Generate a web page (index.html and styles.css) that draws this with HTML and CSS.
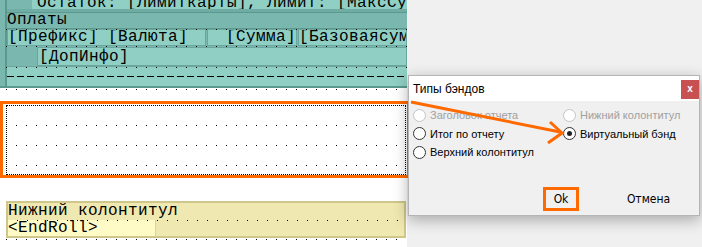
FILE: index.html
```html
<!DOCTYPE html>
<html lang="ru">
<head>
    <meta charset="UTF-8">
    <title>Типы бэндов</title>
    <link rel="stylesheet" href="styles.css">
</head>
<body>
    <div class="screen">
        <div class="designer">
            <div class="band band-teal">
                <div class="band-inner">
                    <div class="row row-top">
                        <div class="cell-dark"></div>
                        <div class="cell-text"><span>Остаток: [Лимиткарты], Лимит: [МаксСу</span></div>
                    </div>
                    <div class="strip"></div>
                    <div class="row row-head">Оплаты</div>
                    <div class="row row-fields dotted">
                        <div class="cell c1">[Префикс] [Валюта]</div>
                        <div class="cell c2">[Сумма]</div>
                        <div class="cell c3">[Базоваясум</div>
                    </div>
                    <div class="row row-info dotted">
                        <div class="info-gap"></div>
                        <div class="cell info">[ДопИнфо]</div>
                    </div>
                    <div class="row row-line dotted">
                        <div class="dash"></div>
                    </div>
                </div>
            </div>
            <div class="dots-line"></div>

            <div class="selected">
                <div class="empty-band">
                    <div class="grid-dots"></div>
                    <div class="grid-dots"></div>
                    <div class="grid-dots"></div>
                </div>
            </div>

            <div class="band band-yellow">
                <div class="yellow-head">Нижний колонтитул</div>
                <div class="yellow-row dotted">
                    <div class="yellow-cell">&lt;EndRoll&gt;</div>
                </div>
            </div>
            <div class="dots-line"></div>
        </div>

        <div class="dialog">
            <div class="title">
                <span>Типы бэндов</span>
                <div class="close">x</div>
            </div>
            <div class="options">
                <label class="radio disabled"><span class="dot"></span>Заголовок отчета</label>
                <label class="radio disabled"><span class="dot"></span>Нижний колонтитул</label>
                <label class="radio"><span class="dot"></span>Итог по отчету</label>
                <label class="radio checked"><span class="dot"></span>Виртуальный бэнд</label>
                <label class="radio"><span class="dot"></span>Верхний колонтитул</label>
            </div>
            <div class="buttons">
                <div class="btn btn-ok">Ok</div>
                <div class="btn btn-cancel">Отмена</div>
            </div>
        </div>

        <!-- annotation arrow -->
        <svg class="arrow" width="702" height="247" viewBox="0 0 702 247">
            <line x1="411" y1="102" x2="560" y2="132" stroke="#ff6a00" stroke-width="3"/>
            <polyline points="550,122 562,133 548,143" fill="none" stroke="#ff6a00" stroke-width="3"/>
        </svg>
    </div>
</body>
</html>
```

FILE: styles.css
```css
body {
    margin: 0;
    padding: 0;
    font-family: "Liberation Mono", "Courier New", monospace;
    font-size: 16px;
    letter-spacing: 0.4px;
    color: #000;
    background: #f0f0f0;
}
.screen {
    position: relative;
    width: 702px;
    height: 247px;
    overflow: hidden;
    background: #f0f0f0;
}
.designer {
    width: 407px;
    height: 247px;
    background: #fff;
}

/* teal data band */
.band-teal {
    background: #7ab7ae;
    padding-left: 5px;
    border-bottom: 2px solid #5b998f;
    overflow: hidden;
}
.band-inner {
    border-left: 2px solid #5b998f;
}
.row {
    position: relative;
    white-space: nowrap;
}
.dotted::before {
    content: "";
    position: absolute;
    left: -1px;
    right: 0;
    top: 0;
    height: 1px;
    background: repeating-linear-gradient(90deg, #000 0 1px, transparent 1px 10px);
    z-index: 1;
}
.row-top {
    height: 9px;
    display: flex;
    overflow: hidden;
}
.cell-dark {
    width: 25px;
    flex: none;
    background: #7ab7ae;
}
.cell-text {
    flex: 1;
    background: #8fcfc4;
    padding-left: 5px;
    line-height: 16px;
}
.cell-text span {
    display: block;
    margin-top: -5px;
}
.strip {
    height: 3px;
    background: #6fada4;
    border-bottom: 1px solid #5b998f;
}
.row-head {
    height: 15px;
    line-height: 15px;
    background: #7ab7ae;
    border-bottom: 1px solid #5b998f;
}
.row-fields {
    height: 17px;
    display: flex;
    gap: 1px;
    background: #7ab7ae;
}
.cell {
    box-sizing: border-box;
    background: #8fcfc4;
    border: 1px solid #6aa69d;
    line-height: 15px;
    overflow: hidden;
}
.c1 {
    width: 199px;
    flex: none;
}
.c2 {
    width: 90px;
    flex: none;
    text-align: right;
}
.c3 {
    flex: 1;
}
.row-info {
    height: 20px;
    display: flex;
    background: #7ab7ae;
}
.info-gap {
    width: 30px;
    flex: none;
}
.cell.info {
    flex: 1;
    margin-top: 1px;
    line-height: 18px;
    padding-left: 1px;
}
.row-line {
    height: 19px;
    background: #8fcfc4;
    border-top: 1px solid #6aa69d;
    display: flex;
    align-items: center;
}
.dash {
    flex: 1;
    height: 1px;
    background: repeating-linear-gradient(90deg, #000 0 7px, transparent 7px 10px);
}
.dots-line {
    height: 1px;
    margin: 1px 0 0 6px;
    width: 400px;
    background: repeating-linear-gradient(90deg, #000 0 1px, transparent 1px 10px);
}

/* selected empty band */
.selected {
    position: relative;
    z-index: 1;
    margin-top: 11px;
    width: 404px;
    height: 71px;
    border: 3px solid #ff6a00;
}
.empty-band {
    box-sizing: border-box;
    margin: 1px 0 0 3px;
    width: 400px;
    height: 70px;
    border: 1px dotted #000;
    padding-top: 19px;
    display: flex;
    flex-direction: column;
    gap: 19px;
}
.grid-dots {
    height: 1px;
    margin: 0 8px 0 9px;
    background: repeating-linear-gradient(90deg, #000 0 1px, transparent 1px 10px);
}

/* footer band */
.band-yellow {
    margin: 23px 0 0 6px;
    width: 400px;
    box-sizing: border-box;
    background: #efe8b0;
    border: 2px solid #cfc68a;
    overflow: hidden;
}
.yellow-head {
    height: 17px;
    line-height: 17px;
}
.yellow-row {
    position: relative;
    height: 16px;
}
.yellow-cell {
    width: 147px;
    height: 16px;
    line-height: 16px;
    background: #fffbc6;
    border-right: 1px solid #ddd39b;
}

/* dialog */
.dialog {
    position: absolute;
    left: 408px;
    top: 75px;
    width: 290px;
    height: 139px;
    border: 1px solid #b5b5b5;
    background: #f0f0f0;
    box-shadow: 0 4px 14px rgba(0, 0, 0, 0.3);
    font-family: "Liberation Sans", Arial, sans-serif;
    letter-spacing: 0;
    z-index: 2;
}
.title {
    height: 25px;
    background: #fff;
    display: flex;
    align-items: flex-start;
    padding-left: 4px;
    font-size: 12px;
}
.title span {
    margin-top: 6px;
}
.close {
    margin: 4px 0 0 auto;
    width: 18px;
    height: 19px;
    background: #c75050;
    color: #fff;
    font-size: 10px;
    font-weight: bold;
    text-align: center;
    line-height: 18px;
}
.options {
    display: grid;
    grid-template-columns: 150px 1fr;
    grid-auto-rows: 18.5px;
    padding: 5px 0 0 4px;
    font-size: 11px;
}
.radio {
    display: flex;
    align-items: center;
    gap: 4px;
}
.dot {
    box-sizing: border-box;
    width: 13px;
    height: 13px;
    border: 1px solid #333;
    border-radius: 50%;
    background: #fff;
    display: flex;
    align-items: center;
    justify-content: center;
}
.disabled {
    color: #a0a0a0;
}
.disabled .dot {
    border-color: #c4c4c4;
}
.checked .dot::after {
    content: "";
    width: 5px;
    height: 5px;
    border-radius: 50%;
    background: #222;
}
.buttons {
    display: flex;
    align-items: center;
    padding: 25px 0 0 134px;
    font-family: "Liberation Sans Narrow", "DejaVu Sans Condensed", sans-serif;
    font-stretch: condensed;
    font-size: 12px;
}
.btn {
    text-align: center;
}
.btn-ok {
    box-sizing: border-box;
    width: 36px;
    height: 24px;
    line-height: 18px;
    border: 3px solid #ff6a00;
}
.btn-cancel {
    width: 75px;
    margin-left: 32px;
}
.arrow {
    position: absolute;
    left: 0;
    top: 0;
    z-index: 3;
}
```
